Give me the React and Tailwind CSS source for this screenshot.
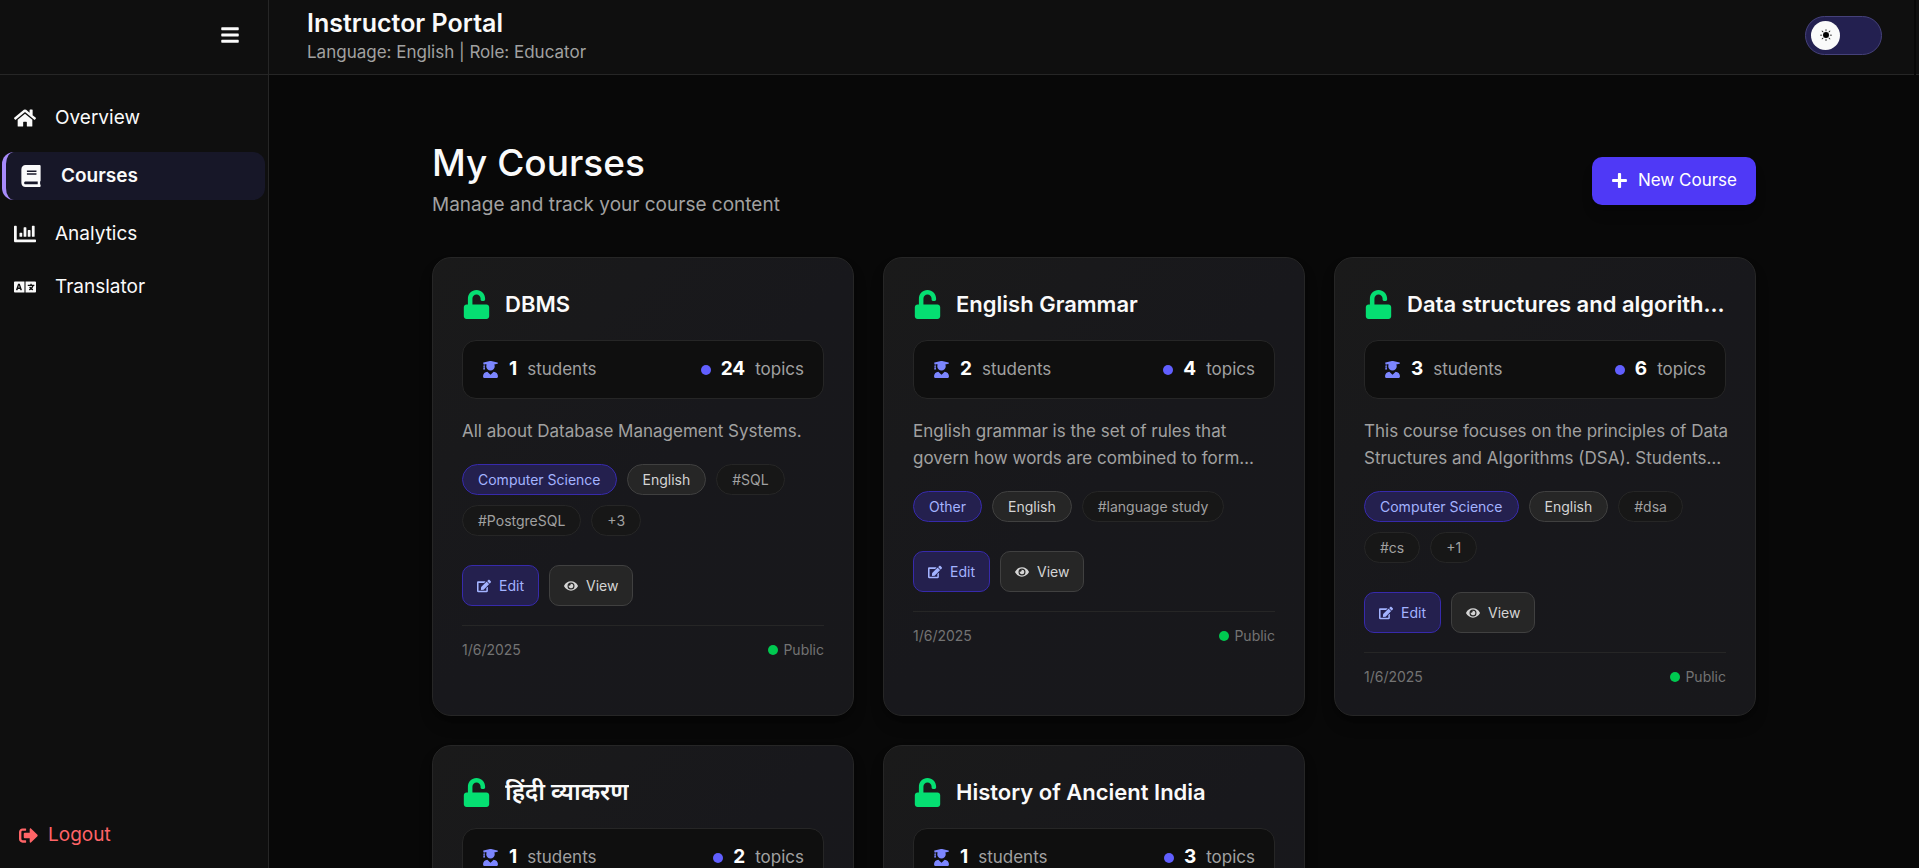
import { FaBars, FaHome, FaBook, FaChartBar, FaLanguage, FaSignOutAlt, FaUnlock, FaUserGraduate, FaEdit, FaEye, FaPlus } from "react-icons/fa";
import { BsSunFill } from "react-icons/bs";

const NAV = [
  { label: "Overview", Icon: FaHome },
  { label: "Courses", Icon: FaBook, active: true },
  { label: "Analytics", Icon: FaChartBar },
  { label: "Translator", Icon: FaLanguage },
];

const COURSES = [
  { title: "DBMS", students: 1, topics: 24, text: "All about Database Management Systems.", subject: "Computer Science", language: "English", tags: ["#SQL", "#PostgreSQL", "+3"] },
  { title: "English Grammar", students: 2, topics: 4, text: "English grammar is the set of rules that govern how words are combined to form…", subject: "Other", language: "English", tags: ["#language study"] },
  { title: "Data structures and algorithms", students: 3, topics: 6, text: "This course focuses on the principles of Data Structures and Algorithms (DSA). Students…", subject: "Computer Science", language: "English", tags: ["#dsa", "#cs", "+1"] },
  { title: "हिंदी व्याकरण", lang: "hi", students: 1, topics: 2, text: "हिंदी व्याकरण का परिचय।", subject: "Other", language: "Hindi", tags: ["#hindi"] },
  { title: "History of Ancient India", students: 1, topics: 3, text: "A survey of the history of ancient India.", subject: "Other", language: "English", tags: ["#history"] },
];

function Sidebar() {
  return (
    <aside className="flex w-[269px] shrink-0 flex-col border-r border-[#262626] bg-[#0f0f0f]">
      <div className="flex h-[75px] shrink-0 items-center justify-end border-b border-[#262626] pr-7">
        <button type="button" aria-label="Toggle menu" className="pb-1 text-xl">
          <FaBars />
        </button>
      </div>
      <nav className="flex flex-col gap-[5px] pt-[19px] pr-[3px] pl-[2px] text-[19px]">
        {NAV.map(({ label, Icon, active }) => (
          <a
            key={label}
            href="#"
            className={
              active
                ? "my-[5px] flex h-12 items-center gap-[19px] rounded-xl border-l-4 border-[#a78bfa] bg-[#171728] pl-[14px] font-semibold"
                : "flex h-12 items-center gap-[19px] rounded-xl pl-3"
            }
          >
            <Icon className="text-[22px]" />
            {label}
          </a>
        ))}
      </nav>
      <button type="button" className="mt-auto mb-[19px] flex items-center gap-[10px] px-[19px] text-[19px] leading-7 text-[#ff6467]">
        <FaSignOutAlt />
        Logout
      </button>
    </aside>
  );
}

function Header() {
  return (
    <div className="flex h-[75px] shrink-0 gap-[2px]">
      <header className="flex flex-1 items-center justify-between border-b border-[#262626] bg-[#0f0f0f] pr-8 pl-[38px]">
        <div>
          <h2 className="text-[25px] leading-[30px] font-semibold">Instructor Portal</h2>
          <p className="text-[17px] leading-7 text-[#a1a1a1]">Language: English | Role: Educator</p>
        </div>
        <button type="button" role="switch" aria-checked="false" aria-label="Theme" className="mb-1 flex h-[39px] w-[77px] items-center rounded-full border border-[#45417a] bg-[#232050] pl-[5px]">
          <span className="flex size-[29px] items-center justify-center rounded-full bg-[#fafafa] text-xs text-black">
            <BsSunFill />
          </span>
        </button>
      </header>
      <div className="w-[3px] border-b border-[#262626] bg-[#0f0f0f]" />
    </div>
  );
}

function CourseCard({ title, lang = "en", students, topics, text, subject, language, tags }) {
  return (
    <article className="min-w-0 rounded-[19px] border border-[#262626] bg-linear-135 from-[#1a1a1a] via-[#18181c] to-[#18181b] p-[29px] shadow-lg shadow-black/30">
      <div className="mb-[19px] flex h-[34px] items-center gap-[14px]">
        <FaUnlock className="shrink-0 text-[29px] text-[#05df72]" />
        <h3
          lang={lang}
          className={
            lang === "hi"
              ? "truncate text-2xl leading-[34px] font-semibold"
              : "truncate text-[22px] leading-[34px] font-semibold"
          }
        >
          {title}
        </h3>
      </div>
      <div className="mb-[19px] flex h-[59px] items-center justify-between rounded-[14px] border border-[#262626] bg-[#0f0f0f] px-[19px] text-[17px] text-[#a1a1a1]">
        <div className="flex items-center gap-[10px]">
          <FaUserGraduate className="text-[#7c86ff]" />
          <strong className="text-[19px] font-bold text-white">{students}</strong>
          students
        </div>
        <div className="flex items-center gap-[10px]">
          <span className="size-[10px] rounded-full bg-[#615fff]" />
          <strong className="text-[19px] font-bold text-white">{topics}</strong>
          topics
        </div>
      </div>
      <p className="-mr-1 mb-[19px] text-[17px] leading-[27px] text-[#a1a1a1]">{text}</p>
      <ul className="mb-[29px] flex flex-wrap gap-[10px] text-sm leading-[19px]">
        <li className="rounded-full border border-[#372aac] bg-[#24204e] px-[15px] py-[5px] text-[#a3b3ff]">{subject}</li>
        <li className="rounded-full border border-[#404040] bg-[#262626] px-[15px] py-[5px] text-[#d4d4d4]">{language}</li>
        {tags.map((tag) => (
          <li key={tag} className="rounded-full border border-[#262626] bg-[#171717] px-[15px] py-[5px] text-[#a1a1a1]">{tag}</li>
        ))}
      </ul>
      <div className="mb-[19px] flex gap-[10px] text-sm">
        <button type="button" className="flex h-[41px] items-center gap-2 rounded-[10px] border border-[#372aac] bg-[#24204e] px-[14px] text-[#a3b3ff]">
          <FaEdit />
          Edit
        </button>
        <button type="button" className="flex h-[41px] items-center gap-2 rounded-[10px] border border-[#404040] bg-[#262626] px-[14px] text-[#d4d4d4]">
          <FaEye />
          View
        </button>
      </div>
      <div className="flex items-center justify-between border-t border-[#262626] pt-[14px] text-sm leading-[19px] text-[#737373]">
        <time>1/6/2025</time>
        <span className="flex items-center gap-[5px]">
          <span className="size-[10px] rounded-full bg-[#00c950]" />
          Public
        </span>
      </div>
    </article>
  );
}

export default function App() {
  return (
    <div className="flex h-screen overflow-hidden bg-[#080808] font-['Inter','Noto_Sans',sans-serif] text-[#fafafa]">
      <Sidebar />
      <div className="flex min-w-0 flex-1 flex-col">
        <Header />
        <main className="min-h-0 flex-1 overflow-hidden">
          <div className="mx-auto max-w-[1382px] px-[29px] pt-[66px] pb-12">
            <div className="mb-[37px] flex items-center justify-between">
              <div>
                <h1 className="text-[37px] leading-[44px] font-medium">My Courses</h1>
                <p className="mt-1 text-[19px] leading-[31px] text-[#a1a1a1]">Manage and track your course content</p>
              </div>
              <button type="button" className="flex h-12 items-center gap-[10px] rounded-[10px] bg-[#4f39f6] px-[19px] text-[17px] text-white shadow-lg">
                <FaPlus />
                New Course
              </button>
            </div>
            <div className="grid grid-cols-3 gap-[29px]">
              {COURSES.map((course) => (
                <CourseCard key={course.title} {...course} />
              ))}
            </div>
          </div>
        </main>
      </div>
    </div>
  );
}
